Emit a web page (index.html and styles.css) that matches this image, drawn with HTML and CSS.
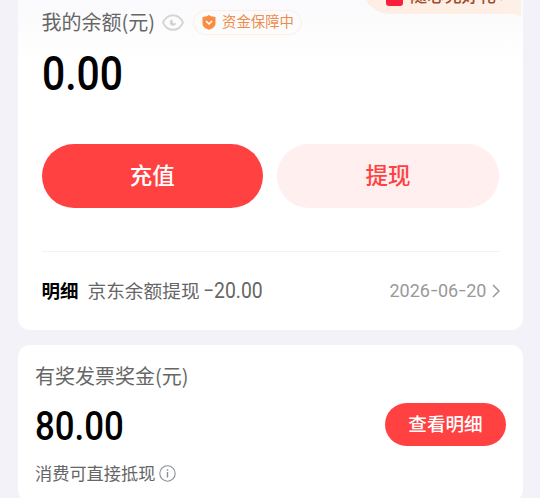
FILE: index.html
```html
<!DOCTYPE html>
<html lang="zh-CN">
<head>
<meta charset="utf-8">
<title>我的余额</title>
<link rel="stylesheet" href="styles.css">
</head>
<body>
<main class="page">
  <section class="card balance">
    <div class="promo">
      <span class="promo-icon"></span><span class="promo-text">随心兑好礼</span>
      <svg class="promo-arrow" width="6" height="10" viewBox="0 0 6 10"><path d="M1 1l4 4-4 4" fill="none" stroke="#a04a28" stroke-width="1.5"/></svg>
    </div>
    <div class="heading">
      <span class="label">我的余额(元)</span>
      <svg class="eye" width="22" height="17" viewBox="0 0 22 17"><path d="M1 8.5C3 4 6.500 1.200 11 1.200S19 4 21 8.500C19 13 15.500 15.800 11 15.800S3 13 1 8.500Z" fill="none" stroke="#d6d6d6" stroke-width="1.900"/><path d="M11 5.400a3.100 3.100 0 1 0 3.100 3.300 2 2 0 0 1-3.100-3.300Z" fill="#d0d0d0"/></svg>
      <span class="guard">
        <svg width="14" height="15" viewBox="0 0 14 15"><path d="M7 0l2.200 1.200 4.300.8v6.500c0 3.200-3 5.200-6.500 6.300C3.500 13.700.5 11.700.5 8.500V2l4.300-.8Z" fill="#f98d43"/><path d="M4 6l3 3 3-3" fill="none" stroke="#fff" stroke-width="1.500"/></svg>
        <span class="guard-text">资金保障中</span>
      </span>
    </div>
    <div class="amount">0.00</div>
    <div class="actions">
      <button class="button primary">充值</button>
      <button class="button secondary">提现</button>
    </div>
    <div class="record">
      <strong>明细</strong>
      <span class="record-name">京东余额提现</span>
      <span class="record-value">−20.00</span>
      <span class="date">2026<i>−</i>06<i>−</i>20</span>
      <svg width="8" height="14" viewBox="0 0 8 14"><path d="M1 1l6 6-6 6" fill="none" stroke="#999" stroke-width="1.500"/></svg>
    </div>
  </section>
  <section class="card bonus">
    <div class="bonus-label">有奖发票奖金(元)</div>
    <div class="bonus-row">
      <div class="bonus-amount">80.00</div>
      <button class="details">查看明细</button>
    </div>
    <div class="note">
      <span>消费可直接抵现</span>
      <svg width="17" height="17" viewBox="0 0 17 17"><circle cx="8.500" cy="8.500" r="7.700" fill="none" stroke="#8b8e98" stroke-width="1.100"/><path d="M8.500 7v5.500M8.500 4.200v1.500" stroke="#8b8e98" stroke-width="1.400"/></svg>
    </div>
  </section>
</main>
</body>
</html>
```
FILE: styles.css
```css
* { box-sizing: border-box; }
body {
  margin: 0;
  background: #f3f2f8;
  font-family: "Noto Sans CJK SC", sans-serif;
  color: #666;
}
.page {
  height: 498px;
  padding: 0 17px 0 17.500px;
  overflow: hidden;
}
.card { background: #fff; }
.balance {
  position: relative;
  height: 330px;
  padding: 8px 24px 0;
  border-radius: 0 0 12px 12px;
  background: linear-gradient(#fafafc, #fff 62px);
}
.promo {
  position: absolute;
  top: -18px;
  right: 2px;
  width: 159px;
  height: 32px;
  padding: 0 0 6px 24px;
  display: flex;
  align-items: center;
  border-radius: 0 0 0 28px;
  background: linear-gradient(90deg, #ffede2, #fdf0e7);
  color: #a04a28;
}
.promo::after {
  content: "";
  position: absolute;
  right: 0;
  top: 32px;
  width: 6px;
  height: 3px;
  background: #fdf0e7;
  clip-path: polygon(0 0, 100% 0, 100% 100%);
}
.promo-icon {
  width: 17px;
  height: 17px;
  margin: 5px 7px 0 0;
  border-radius: 3px;
  background: #fa1e3c;
}
.promo-text {
  font-size: 17.2px;
  line-height: 24px;
  font-weight: 500;
}
.promo-arrow { margin: 2px 0 0 4px; }
.heading {
  display: flex;
  align-items: center;
  height: 28px;
}
.label, .bonus-label {
  font-size: 20px;
  line-height: 28px;
  white-space: nowrap;
}
.label { width: 120.500px; }
.eye { flex: none; }
.guard {
  display: flex;
  align-items: center;
  gap: 6px;
  width: 109px;
  height: 25px;
  margin-left: 9px;
  padding-left: 8px;
  border: 1px solid #feeee5;
  border-radius: 13px;
  color: #ed8d4b;
  font-size: 14.4px;
  line-height: 20px;
  white-space: nowrap;
}
.guard-text { padding-bottom: 2px; }
.amount, .bonus-amount {
  font-family: Roboto, sans-serif;
  font-weight: 500;
  color: #000;
  transform-origin: left;
}
.amount {
  margin-top: 9px;
  height: 56px;
  font-size: 47.5px;
  line-height: 59px;
  transform: scaleX(.86);
}
.actions {
  display: flex;
  gap: 14px;
  margin-top: 43.400px;
}
button {
  border: 0;
  padding: 0;
  font-family: inherit;
}
.button {
  width: 222px;
  height: 64px;
  padding-bottom: 4px;
  border-radius: 32px;
  font-size: 22.500px;
  line-height: 32px;
  font-weight: 500;
}
.primary { color: #fff; background: #ff4142; }
.secondary { color: #ff4142; background: #ffefee; }
.record {
  display: flex;
  align-items: center;
  width: 458px;
  height: 79px;
  margin-top: 42.600px;
  border-top: 1px solid #f3f3f3;
  white-space: nowrap;
}
.record strong {
  width: 46px;
  padding-bottom: 1px;
  font-size: 18.500px;
  color: #000;
}
.record-name {
  width: 115px;
  padding-bottom: 2px;
  font-size: 18.700px;
}
.record-value {
  padding-bottom: 1px;
  font: 400 22px Roboto, sans-serif;
  transform: scaleX(.88);
  transform-origin: left;
}
.date {
  width: 97px;
  margin-left: auto;
  margin-right: 5px;
  font: 400 18px Roboto, sans-serif;
  color: #999;
}
.date i {
  display: inline-block;
  width: 8px;
  font-style: normal;
  transform: scaleX(.8);
  transform-origin: left;
}
.bonus {
  height: 157px;
  margin-top: 14.500px;
  padding: 17px 17px 0 17.500px;
  border-radius: 12px;
}
.bonus-row {
  display: flex;
  justify-content: space-between;
  height: 43px;
  margin-top: 13px;
}
.bonus-amount {
  font-size: 40px;
  line-height: 47px;
  transform: scaleX(.87);
}
.details {
  width: 121px;
  height: 43px;
  padding-bottom: 4px;
  border-radius: 22px;
  color: #fff;
  background: #ff4142;
  font-size: 18.600px;
  font-weight: 500;
}
.note {
  display: flex;
  align-items: center;
  gap: 4px;
  height: 24px;
  margin-top: 15.500px;
  font-size: 17.200px;
}
.note span { padding-bottom: 1px; }
```
